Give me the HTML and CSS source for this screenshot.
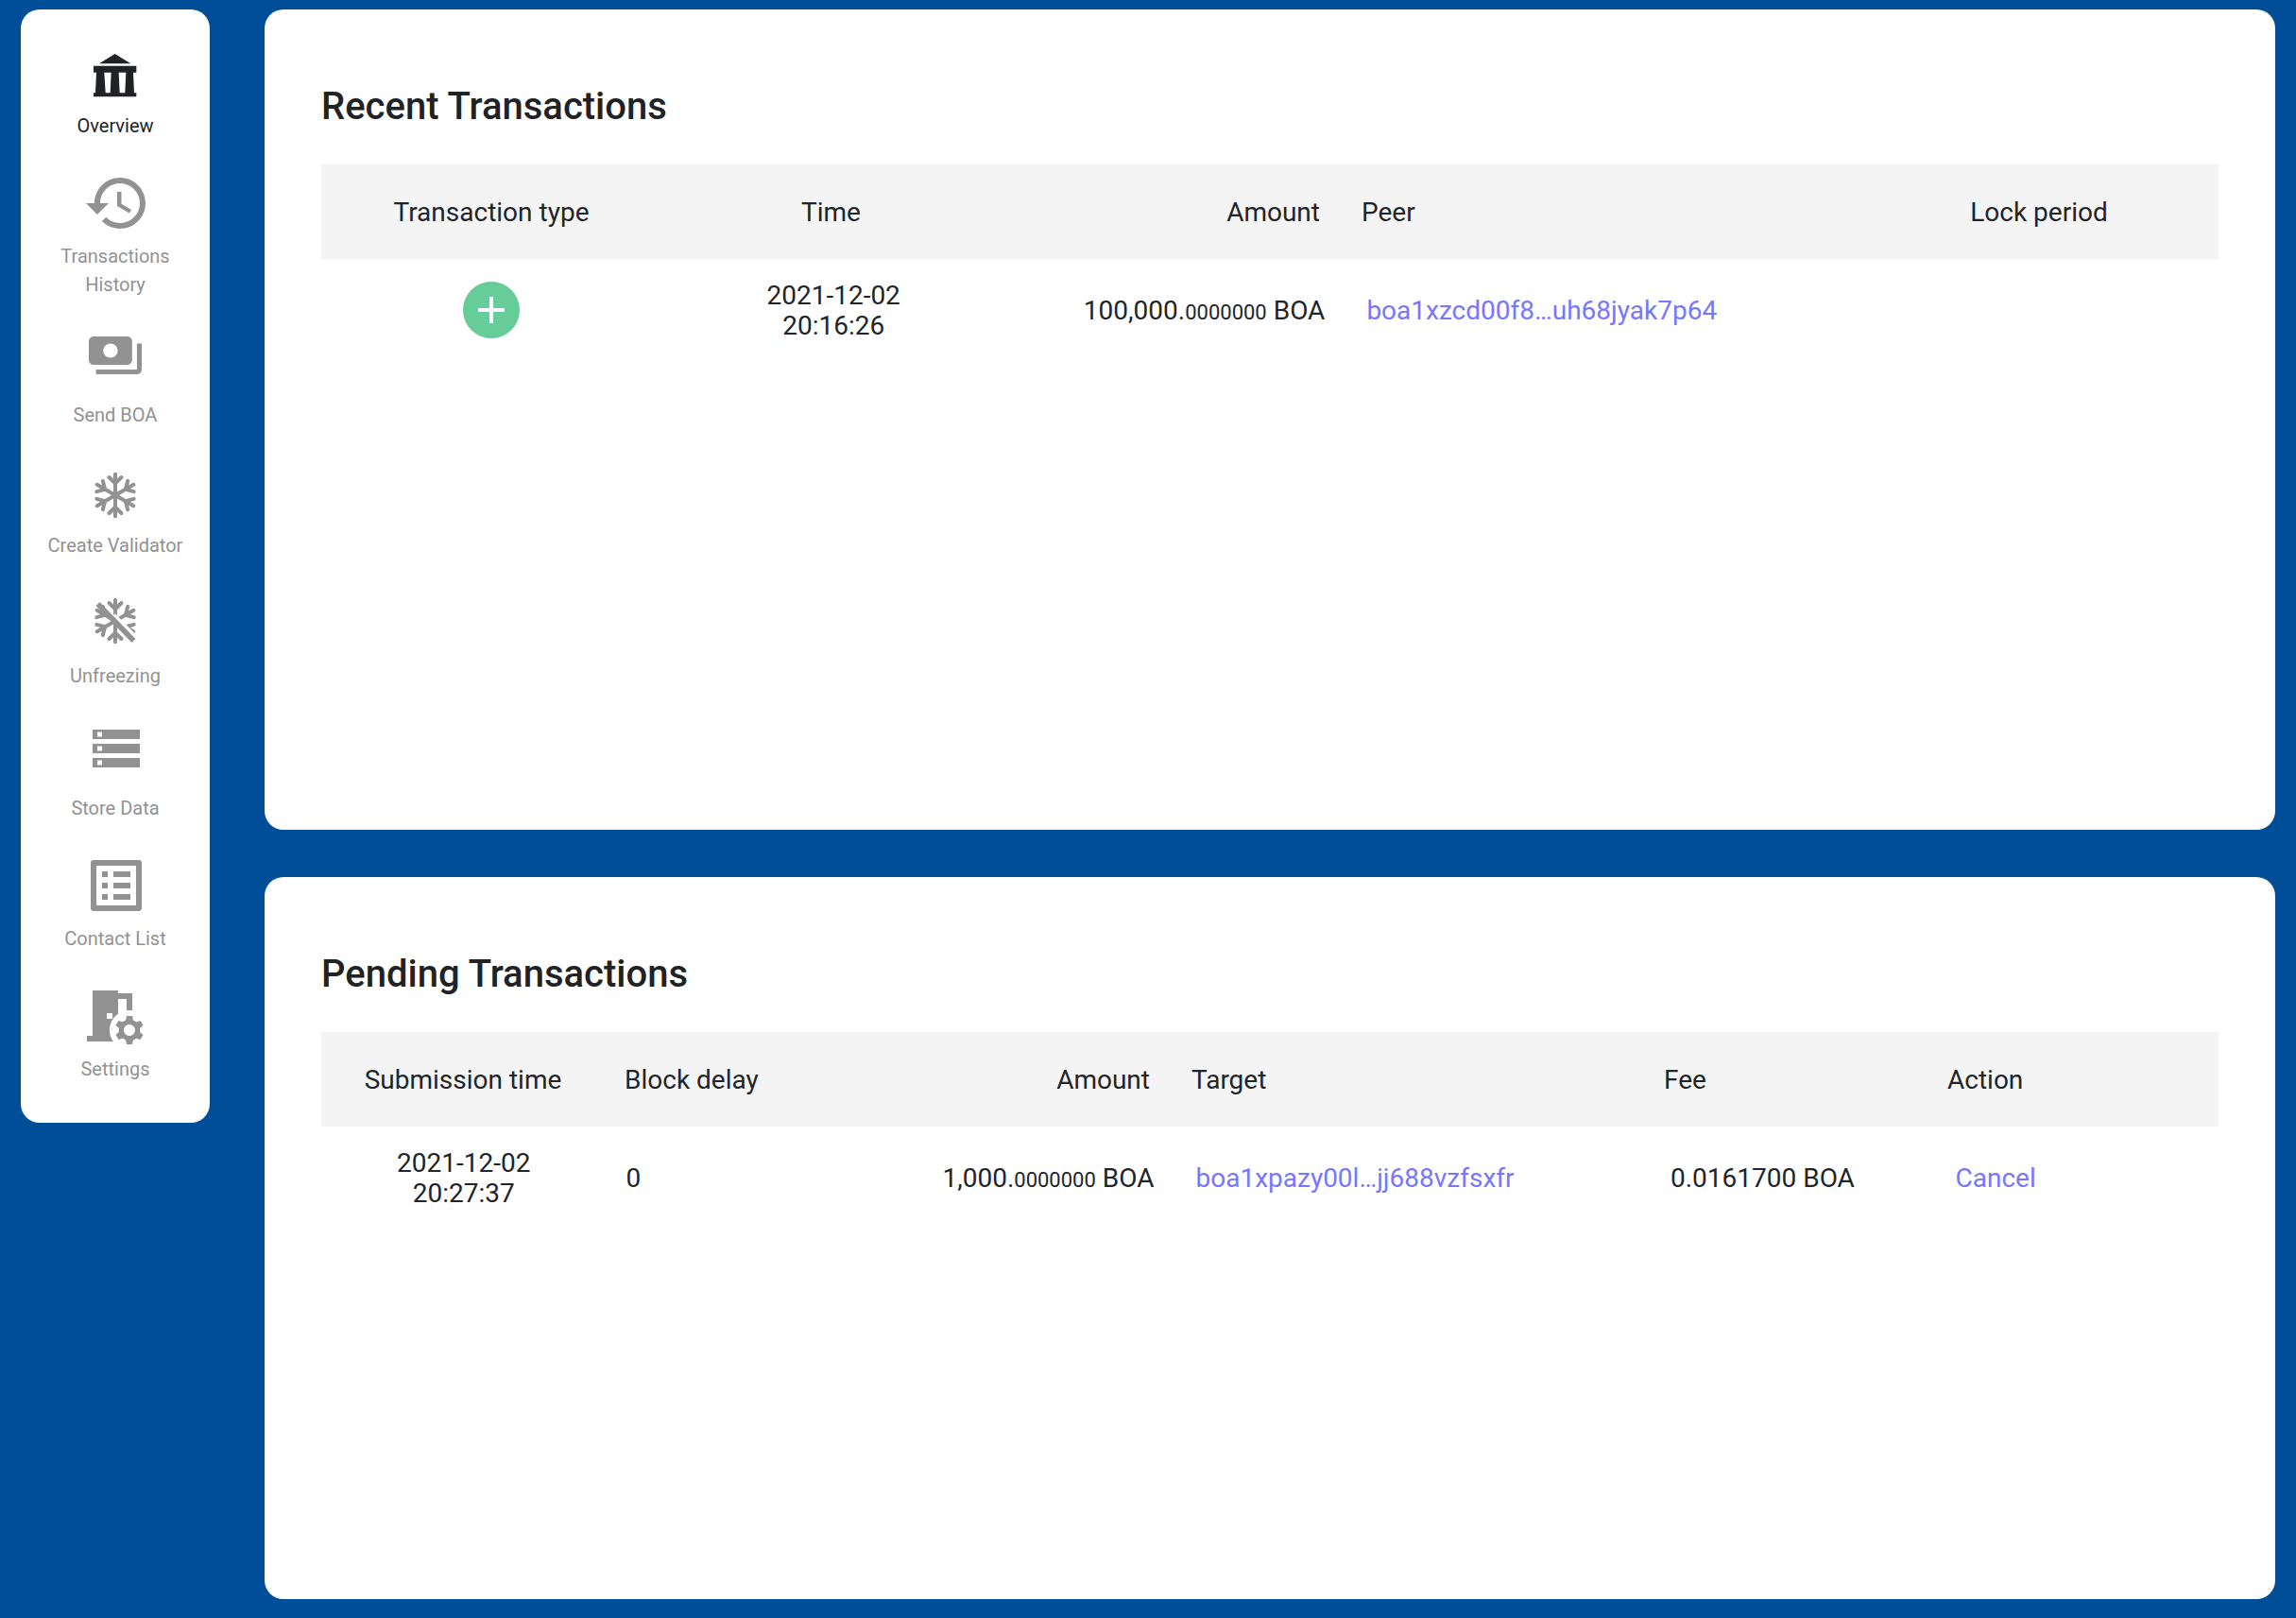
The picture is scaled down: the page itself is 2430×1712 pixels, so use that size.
FILE: index.html
```
<!DOCTYPE html>
<html lang="en">
<head>
<meta charset="utf-8">
<title>Overview</title>
<link rel="stylesheet" href="styles.css">
</head>
<body>
<div class="layout">
  <nav class="sidebar">
    <a class="nav-item active">
      <span class="nav-icon icon-bank">
        <svg width="45.33" height="45.33" viewBox="0 0 136 136"><path d="M68 0l50 31H18zM0 38h136v21h-10l3 65h7v12H0v-12h6l3-65H0zM34 59l4 65h15l3-65zM80 59l3 65h17l3-65z"/></svg>
      </span>
      <span class="nav-label">Overview</span>
    </a>
    <a class="nav-item">
      <span class="nav-icon icon-history">
        <svg width="72" height="72" viewBox="0 0 24 24"><path d="M13 3c-4.97 0-9 4.03-9 9H1l3.89 3.89.07.14L9 12H6c0-3.87 3.13-7 7-7s7 3.13 7 7-3.13 7-7 7c-1.93 0-3.68-.79-4.94-2.06l-1.42 1.42C8.27 19.99 10.51 21 13 21c4.97 0 9-4.03 9-9s-4.03-9-9-9zm-1 5v5l4.28 2.54.72-1.21-3.5-2.08V8H12z"/></svg>
      </span>
      <span class="nav-label">Transactions<br>History</span>
    </a>
    <a class="nav-item">
      <span class="nav-icon icon-payments">
        <svg width="56" height="40" viewBox="1 4 22 16" preserveAspectRatio="none"><path d="M19 14V6c0-1.100-.9-2-2-2H3c-1.100 0-2 .9-2 2v8c0 1.100.9 2 2 2h14c1.100 0 2-.9 2-2zm-9-1c-1.660 0-3-1.340-3-3s1.340-3 3-3 3 1.340 3 3-1.340 3-3 3zm13-6v11c0 1.100-.9 2-2 2H4v-2h17V7h2z"/></svg>
      </span>
      <span class="nav-label">Send BOA</span>
    </a>
    <a class="nav-item">
      <span class="nav-icon icon-freeze">
        <svg width="56" height="56" viewBox="-28 -28 56 56">
          <defs><path id="arm" d="M0 0V-22.300M-6.500 -19L0 -12.500L6.500 -19"/></defs>
          <g class="flake"><use href="#arm"/><use href="#arm" transform="rotate(60)"/><use href="#arm" transform="rotate(120)"/><use href="#arm" transform="rotate(180)"/><use href="#arm" transform="rotate(240)"/><use href="#arm" transform="rotate(300)"/></g>
        </svg>
      </span>
      <span class="nav-label">Create Validator</span>
    </a>
    <a class="nav-item">
      <span class="nav-icon icon-unfreeze">
        <svg width="56" height="56" viewBox="-28 -28 56 56">
          <g class="flake"><use href="#arm"/><use href="#arm" transform="rotate(60)"/><use href="#arm" transform="rotate(120)"/><use href="#arm" transform="rotate(180)"/><use href="#arm" transform="rotate(240)"/><use href="#arm" transform="rotate(300)"/></g>
          <path class="slash-gap" d="M-1.500 -6.500L24 19"/>
          <path class="slash" d="M-18.500 -18L19.500 21"/>
        </svg>
      </span>
      <span class="nav-label">Unfreezing</span>
    </a>
    <a class="nav-item">
      <span class="nav-icon icon-storage">
        <svg width="60" height="60" viewBox="0 0 24 24"><path d="M2 20h20v-4H2v4zm2-3h2v2H4v-2zM2 4v4h20V4H2zm4 3H4V5h2v2zm-4 7h20v-4H2v4zm2-3h2v2H4v-2z"/></svg>
      </span>
      <span class="nav-label">Store Data</span>
    </a>
    <a class="nav-item">
      <span class="nav-icon icon-contacts">
        <svg width="72" height="72" viewBox="0 0 24 24"><path d="M19 5v14H5V5h14m1.100-2H3.900c-.5 0-.9.4-.9.9v16.200c0 .4.4.9.9.9h16.200c.4 0 .9-.5.9-.9V3.900c0-.5-.5-.9-.9-.9zM11 7h6v2h-6V7zm0 4h6v2h-6v-2zm0 4h6v2h-6v-2zM7 7h2v2H7V7zm0 4h2v2H7v-2zm0 4h2v2H7v-2z"/></svg>
      </span>
      <span class="nav-label">Contact List</span>
    </a>
    <a class="nav-item">
      <span class="nav-icon icon-settings">
        <svg width="72" height="72" viewBox="0 0 24 24"><path fill-rule="evenodd" d="M14 11.260V6h3v4h2V4h-5V3H5v16H3v2h9.260A6.963 6.963 0 0 1 11 17c0-2.380 1.190-4.470 3-5.740zM10 11h2v2h-2v-2zM21.690 16.370l1.140-1-1-1.730-1.450.49c-.32-.27-.68-.48-1.080-.63L19 12h-2l-.3 1.490c-.4.15-.76.36-1.080.63l-1.450-.49-1 1.730 1.140 1c-.08.5-.08.76 0 1.260l-1.140 1 1 1.730 1.450-.49c.32.27.68.48 1.080.63L17 22h2l.3-1.490c.4-.15.76-.36 1.080-.63l1.450.49 1-1.730-1.140-1c.08-.51.08-.77 0-1.270zM18 19c-1.100 0-2-.9-2-2s.9-2 2-2 2 .9 2 2-.9 2-2 2z"/></svg>
      </span>
      <span class="nav-label">Settings</span>
    </a>
  </nav>

  <main class="content">
    <section class="card card-recent">
      <h2 class="card-title">Recent Transactions</h2>
      <div class="row row-head recent-grid">
        <div class="cell center">Transaction type</div>
        <div class="cell center">Time</div>
        <div class="cell right">Amount</div>
        <div class="cell">Peer</div>
        <div class="cell center">Lock period</div>
      </div>
      <div class="row row-body recent-grid">
        <div class="cell center icon-cell">
          <svg class="type-icon" width="60" height="60" viewBox="0 0 60 60"><circle cx="30" cy="30" r="30" fill="#66cc99"/><path d="M16 28h12V16h4v12h12v4H32v12h-4V32H16z" fill="#fff"/></svg>
        </div>
        <div class="cell center">2021-12-02<br>20:16:26</div>
        <div class="cell right">100,000.<small class="decimals">0000000</small> BOA</div>
        <div class="cell"><a class="link">boa1xzcd00f8…uh68jyak7p64</a></div>
        <div class="cell center"></div>
      </div>
    </section>

    <section class="card card-pending">
      <h2 class="card-title">Pending Transactions</h2>
      <div class="row row-head pending-grid">
        <div class="cell center">Submission time</div>
        <div class="cell">Block delay</div>
        <div class="cell right">Amount</div>
        <div class="cell">Target</div>
        <div class="cell">Fee</div>
        <div class="cell">Action</div>
      </div>
      <div class="row row-body pending-grid">
        <div class="cell center">2021-12-02<br>20:27:37</div>
        <div class="cell">0</div>
        <div class="cell right">1,000.<small class="decimals">0000000</small> BOA</div>
        <div class="cell"><a class="link">boa1xpazy00l…jj688vzfsxfr</a></div>
        <div class="cell">0.0161700 BOA</div>
        <div class="cell"><a class="link">Cancel</a></div>
      </div>
    </section>
  </main>
</div>
</body>
</html>
```
FILE: styles.css
```
* { box-sizing: border-box; }

body {
  margin: 0;
  background: #004e98;
  color: #212529;
  font-family: Roboto, sans-serif;
}

.layout {
  display: flex;
  align-items: flex-start;
  gap: 58px;
  min-height: 1712px;
  padding: 10px 22px 20px;
}

.sidebar {
  display: flex;
  flex-direction: column;
  flex: none;
  width: 200px;
  height: 1178px;
  background: #fff;
  border-radius: 20px;
}

.nav-item {
  display: flex;
  flex-direction: column;
  color: #929292;
  font-size: 20px;
  line-height: 30px;
  text-align: center;
}

.nav-item.active { color: #202226; }

.nav-icon {
  display: flex;
  justify-content: center;
  align-items: flex-start;
  height: 108px;
}

.nav-icon svg { display: block; flex: none; fill: currentColor; }

.icon-bank { padding-top: 47.33px; }
.icon-history { padding: 31px 0 0 4px; }
.icon-payments { padding-top: 40px; }
.icon-freeze { padding-top: 42px; }
.icon-unfreeze { padding-top: 37px; }
.icon-storage { height: 110px; padding: 32px 0 0 2px; }
.icon-contacts { padding: 31px 0 0 2px; }
.icon-settings { padding: 31px 6px 0 0; }

.flake {
  fill: none;
  stroke: currentColor;
  stroke-width: 4;
  stroke-linecap: round;
}

.slash { stroke: currentColor; stroke-width: 5.5; }
.slash-gap { stroke: #fff; stroke-width: 3.5; }

.content {
  display: flex;
  flex-direction: column;
  gap: 50px;
  flex: 1;
}

.card {
  padding: 73px 60px 0;
  background: #fff;
  border-radius: 20px;
}

.card-recent { height: 868px; }
.card-pending { height: 764px; }

.card-title {
  margin: 0 0 31px;
  color: #202226;
  font-size: 40px;
  font-weight: 500;
  line-height: 60px;
}

.row {
  display: grid;
  align-items: center;
  padding-top: 2px;
  font-size: 28px;
  line-height: 32px;
}

.recent-grid { grid-template-columns: 360fr 359fr 362fr 547fr 380fr; }
.pending-grid { grid-template-columns: 300fr 262fr 339fr 500fr 300fr 307fr; }

.row-head {
  height: 100px;
  background: #f4f4f4;
}

.row-body {
  height: 108px;
  margin-right: -10px;
}

.cell {
  min-width: 0;
  padding-left: 20px;
  white-space: nowrap;
}

.pending-grid .cell:nth-child(2) { padding-left: 21px; }

.center { padding-left: 0; text-align: center; }
.right { padding-right: 24px; text-align: right; }

.icon-cell { padding: 0 2px 2px 0; }

.type-icon { display: block; margin: 0 auto; }

.decimals { font-size: 22px; line-height: 1; }

.link { color: #7876ff; }
```
